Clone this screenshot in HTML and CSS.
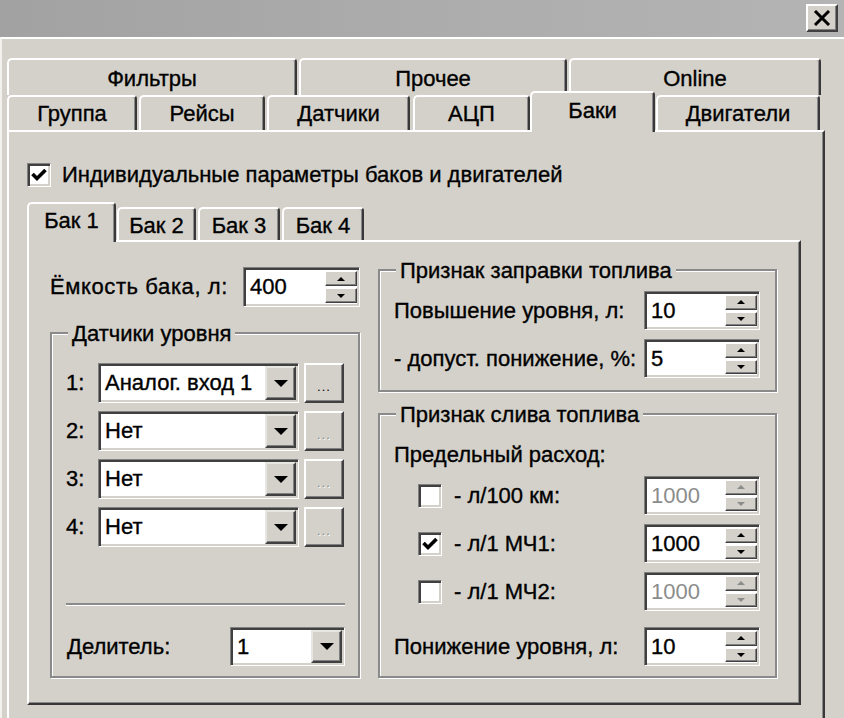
FILE: index.html
```html
<!DOCTYPE html>
<html lang="ru">
<head>
<meta charset="utf-8">
<title>Баки</title>
<link rel="stylesheet" href="styles.css">
</head>
<body>
<div class="titlebar">
  <div class="close"><svg width="18" height="16" viewBox="0 0 18 16"><path d="M2 1 L16 15 M16 1 L2 15" stroke="#000" stroke-width="3" fill="none"/></svg></div>
</div>
<div class="dialog">
  <div class="tabrow back">
    <div class="tab t-filters">Фильтры</div>
    <div class="tab t-other">Прочее</div>
    <div class="tab t-online">Online</div>
  </div>
  <div class="tabrow front">
    <div class="tab t-group">Группа</div>
    <div class="tab t-trips">Рейсы</div>
    <div class="tab t-sensors">Датчики</div>
    <div class="tab t-adc">АЦП</div>
    <div class="tab sel t-tanks">Баки</div>
    <div class="tab t-engines">Двигатели</div>
  </div>
  <div class="panel">
    <div class="main-check">
      <span class="cb"><svg width="20" height="20" viewBox="0 0 20 20"><path d="M3.5 9 L8 13.5 L16.5 5" stroke="#000" stroke-width="3.6" fill="none"/></svg></span>
      <span>Индивидуальные параметры баков и двигателей</span>
    </div>
    <div class="subtabs">
      <div class="subtab sel s1">Бак 1</div>
      <div class="subtab s2">Бак 2</div>
      <div class="subtab s3">Бак 3</div>
      <div class="subtab s4">Бак 4</div>
    </div>
    <div class="sheet">
      <div class="col">
        <div class="field-row cap-row">
          <span class="caplabel">Ёмкость бака, л:</span>
          <div class="spin w117"><div class="spin-val">400</div><div class="spin-btns"><div class="sbtn"><i class="up"></i></div><div class="sbtn"><i class="dn"></i></div></div></div>
        </div>
        <div class="group g-sensors">
          <div class="group-title">Датчики уровня</div>
          <div class="sensor-row first">
            <span class="num">1:</span>
            <div class="combo w201"><div class="combo-val">Аналог. вход 1</div><div class="combo-btn"><i class="tri"></i></div></div>
            <div class="dots">...</div>
          </div>
          <div class="sensor-row">
            <span class="num">2:</span>
            <div class="combo w201"><div class="combo-val">Нет</div><div class="combo-btn"><i class="tri"></i></div></div>
            <div class="dots off">...</div>
          </div>
          <div class="sensor-row">
            <span class="num">3:</span>
            <div class="combo w201"><div class="combo-val">Нет</div><div class="combo-btn"><i class="tri"></i></div></div>
            <div class="dots off">...</div>
          </div>
          <div class="sensor-row">
            <span class="num">4:</span>
            <div class="combo w201"><div class="combo-val">Нет</div><div class="combo-btn"><i class="tri"></i></div></div>
            <div class="dots off">...</div>
          </div>
          <div class="sep"></div>
          <div class="field-row div-row">
            <span class="divlabel">Делитель:</span>
            <div class="combo w115 h39"><div class="combo-val">1</div><div class="combo-btn"><i class="tri"></i></div></div>
          </div>
        </div>
      </div>
      <div class="col">
        <div class="group g-refuel">
          <div class="group-title">Признак заправки топлива</div>
          <div class="field-row srow first">
            <span>Повышение уровня, л:</span>
            <div class="spin w116"><div class="spin-val">10</div><div class="spin-btns"><div class="sbtn"><i class="up"></i></div><div class="sbtn"><i class="dn"></i></div></div></div>
          </div>
          <div class="field-row srow">
            <span>- допуст. понижение, %:</span>
            <div class="spin w116"><div class="spin-val">5</div><div class="spin-btns"><div class="sbtn"><i class="up"></i></div><div class="sbtn"><i class="dn"></i></div></div></div>
          </div>
        </div>
        <div class="group g-drain">
          <div class="group-title">Признак слива топлива</div>
          <div class="limit-label">Предельный расход:</div>
          <div class="field-row crow first">
            <span class="cb"></span>
            <span class="clabel">- л/100 км:</span>
            <div class="spin w116 off"><div class="spin-val">1000</div><div class="spin-btns"><div class="sbtn"><i class="up"></i></div><div class="sbtn"><i class="dn"></i></div></div></div>
          </div>
          <div class="field-row crow">
            <span class="cb"><svg width="20" height="20" viewBox="0 0 20 20"><path d="M3.5 9 L8 13.5 L16.5 5" stroke="#000" stroke-width="3.6" fill="none"/></svg></span>
            <span class="clabel">- л/1 МЧ1:</span>
            <div class="spin w116"><div class="spin-val">1000</div><div class="spin-btns"><div class="sbtn"><i class="up"></i></div><div class="sbtn"><i class="dn"></i></div></div></div>
          </div>
          <div class="field-row crow">
            <span class="cb"></span>
            <span class="clabel">- л/1 МЧ2:</span>
            <div class="spin w116 off"><div class="spin-val">1000</div><div class="spin-btns"><div class="sbtn"><i class="up"></i></div><div class="sbtn"><i class="dn"></i></div></div></div>
          </div>
          <div class="field-row srow last">
            <span>Понижение уровня, л:</span>
            <div class="spin w116"><div class="spin-val">10</div><div class="spin-btns"><div class="sbtn"><i class="up"></i></div><div class="sbtn"><i class="dn"></i></div></div></div>
          </div>
        </div>
      </div>
    </div>
  </div>
</div>
</body>
</html>
```
FILE: styles.css
```css
* { box-sizing: border-box; }
html, body { margin: 0; }
body {
  width: 844px;
  height: 718px;
  overflow: hidden;
  background: #d4d1ca;
  font-family: "Liberation Sans", Arial, sans-serif;
  font-size: 22px;
  color: #000;
  -webkit-text-stroke: 0.35px currentColor;
}

.titlebar {
  height: 37px;
  background: linear-gradient(90deg, #a2a2a2, #adadad 55%, #b4b4b4);
  display: flex;
  justify-content: flex-end;
  align-items: flex-start;
  padding: 4px 6px 0 0;
}
.close {
  width: 32px;
  height: 28px;
  background: #d4d1ca;
  border: 2px solid;
  border-color: #fff #404040 #404040 #fff;
  box-shadow: inset -1px -1px #808080;
  display: flex;
  align-items: center;
  justify-content: center;
}

.dialog {
  border-top: 2px solid #fff;
  border-left: 2px solid #f2f1ee;
  padding: 19px 0 0 5px;
  height: 681px;
}

/* main tabs */
.tabrow { display: flex; }
.tabrow.back { height: 37px; }
.tabrow.front { height: 35px; }
.tab {
  background: #d4d1ca;
  border-top: 2px solid #fff;
  border-left: 2px solid #fff;
  border-right: 2px solid #383838;
  border-radius: 5px 4px 0 0;
  box-shadow: inset -1px 0 #8a8a8a;
  display: flex;
  justify-content: center;
  align-items: center;
}
.back .tab { padding-top: 3px; }
.t-filters { width: 290px; margin-right: 2px; }
.t-other { width: 268px; margin-right: 2px; }
.t-online { width: 252px; }
.t-group { width: 130px; margin-right: 2px; }
.t-trips { width: 126px; margin-right: 2px; }
.t-sensors { width: 143px; margin-right: 3px; }
.t-adc { width: 117px; }
.t-tanks { width: 125px; margin-right: 1px; }
.t-engines { width: 164px; }
.tab.sel {
  align-self: flex-start;
  height: 41px;
  margin-top: -4px;
  padding-bottom: 4px;
  position: relative;
  z-index: 2;
}

.panel {
  width: 818px;
  height: 600px;
  border-top: 2px solid #fff;
  border-left: 2px solid #fff;
  border-right: 2px solid #383838;
  box-shadow: inset -1px 0 #8a8a8a;
  padding: 31px 0 0 18px;
}

.main-check {
  display: flex;
  align-items: center;
  height: 24px;
  gap: 11px;
}

/* checkbox */
.cb {
  width: 24px;
  height: 24px;
  flex: none;
  background: #fff;
  border: 1px solid;
  border-color: #808080 #fff #fff #808080;
  box-shadow: inset 2px 2px #404040, inset -2px -2px #d4d1ca;
  display: flex;
  align-items: center;
  justify-content: center;
}

/* sub tabs */
.subtabs {
  display: flex;
  height: 33px;
  margin-top: 20px;
}
.subtab {
  background: #d4d1ca;
  border-top: 2px solid #fff;
  border-left: 2px solid #fff;
  border-right: 2px solid #383838;
  border-radius: 5px 4px 0 0;
  box-shadow: inset -1px 0 #8a8a8a;
  display: flex;
  justify-content: center;
  align-items: center;
  padding-top: 2px;
}
.subtab.sel {
  align-self: flex-start;
  height: 40px;
  margin-top: -5px;
  padding: 0 0 4px;
  position: relative;
  z-index: 2;
}
.s1 { width: 89px; }
.s2 { width: 79px; margin-left: 1px; margin-right: 2px; }
.s3 { width: 82px; margin-right: 2px; }
.s4 { width: 82px; }

.sheet {
  width: 774px;
  height: 465px;
  border: 2px solid;
  border-color: #fff #383838 #383838 #fff;
  box-shadow: inset -1px -1px #8a8a8a;
  padding: 25px 0 0 21px;
  display: grid;
  grid-template-columns: 310px 399px;
  column-gap: 18px;
  align-items: start;
}

.field-row {
  display: flex;
  align-items: center;
  justify-content: space-between;
}
.cap-row { height: 40px; }
.caplabel { letter-spacing: 0.6px; }

/* group boxes */
.group {
  display: flex;
  flex-direction: column;
  border: 2px solid #8a8a8a;
  box-shadow: 1px 1px 0 #fff, inset 1px 1px 0 #fff;
}
.group-title {
  align-self: flex-start;
  height: 24px;
  line-height: 24px;
  margin: -12px 0 0 2px;
  padding: 0 4px;
  background: #d4d1ca;
}
.g-sensors { margin-top: 25px; padding: 0 13px 10px 14px; }
.g-refuel { margin-top: 2px; padding: 0 15px 12px 14px; }
.g-drain { margin-top: 21px; padding: 0 15px 10px 14px; }

.sensor-row {
  display: flex;
  align-items: center;
  height: 40px;
  margin-top: 8px;
}
.sensor-row.first { margin-top: 17px; }
.num { width: 32px; }

.sep {
  margin-top: 56px;
  height: 3px;
  border-top: 2px solid #8a8a8a;
  border-bottom: 1px solid #fff;
}
.div-row { margin-top: 21px; height: 39px; }
.divlabel { padding-left: 1px; }

.srow { height: 39px; margin-top: 9px; }
.srow.first { margin-top: 8px; }
.srow.last { margin-top: 16px; }
.limit-label { height: 24px; line-height: 24px; margin-top: 16px; }
.crow { height: 39px; margin-top: 9px; justify-content: flex-start; }
.crow .cb { margin-left: 24px; }
.clabel { margin-left: 12px; }
.crow .spin { margin-left: auto; }

/* sunken edit */
.spin, .combo {
  display: flex;
  background: #fff;
  border: 1px solid;
  border-color: #808080 #fff #fff #808080;
  box-shadow: inset 2px 2px #404040, inset -2px -2px #d4d1ca;
  padding: 2px;
}
.spin { height: 39px; }
.w117 { width: 117px; height: 40px; }
.w116 { width: 116px; }
.spin-val, .combo-val {
  flex: 1;
  display: flex;
  align-items: center;
  padding-left: 4px;
  white-space: nowrap;
  overflow: hidden;
}
.spin-btns {
  width: 32px;
  display: flex;
  flex-direction: column;
  gap: 2px;
  padding: 1px 0;
}
.sbtn {
  flex: 1;
  background: #d4d1ca;
  border: 1px solid;
  border-color: #fff #404040 #404040 #fff;
  box-shadow: inset -1px -1px #808080;
  display: flex;
  align-items: center;
  justify-content: center;
}
.sbtn i { width: 0; height: 0; border-left: 4px solid transparent; border-right: 4px solid transparent; }
.sbtn .up { border-bottom: 4px solid #000; }
.sbtn .dn { border-top: 4px solid #000; }
.spin.off .spin-val { color: #8c8c8c; -webkit-text-stroke: 0; }
.spin.off .sbtn .up { border-bottom-color: #8c8c8c; }
.spin.off .sbtn .dn { border-top-color: #8c8c8c; }

.combo { height: 40px; }
.w201 { width: 201px; }
.w115 { width: 115px; }
.h39 { height: 39px; }
.combo-btn {
  width: 31px;
  background: #d4d1ca;
  border: 2px solid;
  border-color: #e8e6e2 #404040 #404040 #e8e6e2;
  box-shadow: inset -1px -1px #808080;
  display: flex;
  align-items: center;
  justify-content: center;
}
.tri {
  width: 0;
  height: 0;
  border-left: 7px solid transparent;
  border-right: 7px solid transparent;
  border-top: 7px solid #000;
}

.dots {
  width: 40px;
  height: 40px;
  margin-left: 5px;
  background: #d4d1ca;
  border: 2px solid;
  border-color: #fff #404040 #404040 #fff;
  box-shadow: inset -1px -1px #808080;
  display: flex;
  align-items: center;
  justify-content: center;
  font-size: 13px;
  padding-top: 6px;
  letter-spacing: 1px;
  -webkit-text-stroke: 0;
}
.dots.off { color: #8c8c8c; text-shadow: 1px 1px #fff; }
```
